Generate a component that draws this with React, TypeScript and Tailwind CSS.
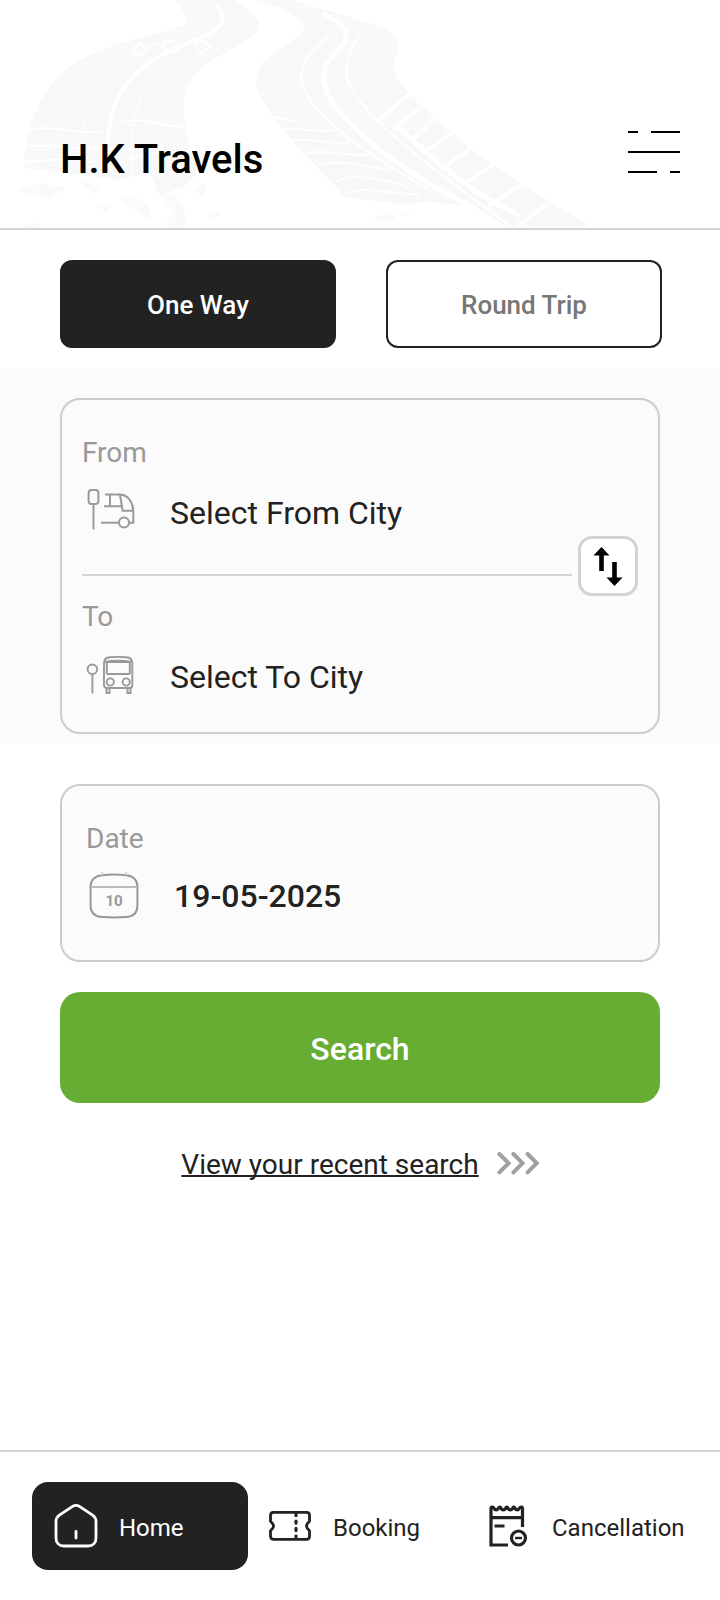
import React, { useState } from 'react';
import { clsx } from 'clsx';

const TyreTracks = () => (
  <svg
    className="absolute left-0 top-0 w-[720px] h-[228px] pointer-events-none"
    viewBox="0 0 720 228"
    fill="none"
    aria-hidden="true"
  >
    <defs>
      <pattern id="tread" width="50" height="5" patternUnits="userSpaceOnUse" patternTransform="rotate(3)">
        <path d="M0 2 Q12 0 25 2 T50 2" stroke="#fff" strokeWidth="1" opacity="0.4" />
      </pattern>
      <clipPath id="left-track">
        <path d="M175 0H232C250 8 262 20 259 28C256 40 225 50 205 65C188 78 182 95 184 115C186 135 190 150 198 172L188 184L160 196L150 172L120 180L24 168C24 140 34 105 52 84C80 45 150 38 185 25C190 15 180 8 175 0Z" />
      </clipPath>
      <clipPath id="right-track">
        <path d="M258 0H290L340 14L385 28C398 34 400 45 397 55C393 62 393 72 396 78L420 105L475 152L530 190L590 226H505L474 206L430 202L400 204L345 197L325 175L300 150L275 120L257 90C254 70 262 62 275 52C290 42 304 36 304 26C300 16 280 8 258 0Z" />
      </clipPath>
    </defs>

    <g clipPath="url(#left-track)">
      <path d="M0 0H300V228H0Z" fill="#f8f8f8" />
      <path d="M0 0H300V228H0Z" fill="url(#tread)" />
      <path d="M216 6C228 16 224 28 205 36C165 52 108 70 108 145" stroke="#fff" strokeWidth="4" />
      <path d="M170 40C120 50 80 90 82 145" stroke="#fff" strokeWidth="1" />
      <path d="M190 55C150 66 126 100 132 180" stroke="#fff" strokeWidth="1" />
      <path d="M24 130C50 124 70 134 100 132M20 148C50 142 80 152 120 148M20 162L90 158M120 122C150 116 170 130 190 126M130 160C150 148 180 156 200 148" stroke="#fff" strokeWidth="2" />
      <path d="M132 50L140 43L147 50L140 56ZM162 45C168 38 178 40 180 48C176 54 166 53 162 45ZM194 42L200 54L210 46L204 41Z" stroke="#fff" strokeWidth="2" />
    </g>
    <path
      d="M18 190L40 183L66 188L50 200L30 194ZM80 180L100 188L92 194ZM96 204L110 207L104 212ZM118 200L134 196L148 206L152 222L138 212ZM158 192L176 196L184 208L186 226H164L174 212ZM192 190L206 184L204 198ZM208 210L222 214L212 220ZM22 226L36 223L40 228H22Z"
      fill="#fafafa"
    />

    <g clipPath="url(#right-track)">
      <path d="M240 0H600V228H240Z" fill="#f8f8f8" />
      <path d="M240 0H600V130H240Z" fill="url(#tread)" />
      <path d="M322 14C344 22 352 34 342 46C322 66 316 80 336 108C364 142 410 176 474 208" stroke="#fff" strokeWidth="5" />
      <path d="M330 34C310 52 298 66 302 84C312 112 346 142 430 190" stroke="#fff" strokeWidth="2" />
      <path d="M360 34C346 56 342 74 352 90C374 124 420 160 510 226" stroke="#fff" strokeWidth="2" />
      <path d="M396 126L440 164L476 192L520 216" stroke="#fff" strokeWidth="5" />
      <path
        d="M270 116L300 122M280 130C300 126 318 134 334 130M290 141C310 136 330 146 350 142M305 154C325 148 350 158 370 154M318 165C340 158 370 168 390 170M335 182C350 172 390 180 410 188M350 192C370 186 400 196 420 194"
        stroke="#fff"
        strokeWidth="2"
      />
      <path
        d="M412 92L376 122M426 104L396 126M440 114L412 140M458 128L428 150M476 144L446 166M500 160L464 184M528 180L488 206M556 198L518 226"
        stroke="#fff"
        strokeWidth="4"
      />
    </g>
    <path d="M374 216L396 214L394 220L376 221ZM402 212L412 214L408 218Z" fill="#fafafa" />
  </svg>
);

const MenuIcon = () => (
  <svg className="w-[52px] h-[44px]" viewBox="0 0 52 44" stroke="#000" strokeWidth="2" aria-hidden="true">
    <path d="M0 2H10M23 2H52M0 22H52M0 42H29M42 42H52" />
  </svg>
);

const FromBusIcon = () => (
  <svg className="size-14 shrink-0" viewBox="0 0 56 56" fill="none" stroke="#999" strokeWidth="2" aria-hidden="true">
    <rect x="6.6" y="6" width="9.8" height="14" rx="3" />
    <path d="M11.5 20V45.5" />
    <path d="M23 10.5H37C46 10.5 51.3 18 51.3 28V38.7H47" />
    <path d="M28 11V22M22 22.2H39M38 11L40.7 26.7H51.5" />
    <circle cx="42" cy="38.5" r="5" />
    <path d="M19 38.7H37" />
  </svg>
);

const ToBusIcon = () => (
  <svg className="size-14 shrink-0" viewBox="0 0 56 56" fill="none" stroke="#999" strokeWidth="1.9" aria-hidden="true">
    <circle cx="10.4" cy="21.3" r="4.8" />
    <path d="M10.4 26V45.5" />
    <path d="M22 15C22 11 24 9.4 28 9.2C33 8.8 39 8.8 44 9.2C48 9.4 50.3 11 50.3 15V37C50.3 39 49 40 47.5 40H25C23 40 22 39 22 37Z" />
    <path d="M23 13.8C30 12.6 42 12.6 49 13.8" />
    <rect x="24.8" y="14" width="23" height="12" rx="1" />
    <circle cx="28.3" cy="34" r="3.6" />
    <circle cx="44.2" cy="34" r="3.6" />
    <path d="M24.5 40V45H27.5V40M45.5 40V45H48.5V40" />
  </svg>
);

const CalendarIcon = () => (
  <svg className="size-14 shrink-0" viewBox="0 0 56 56" fill="none" stroke="#999" aria-hidden="true">
    <path
      d="M16 7.2C24 6.4 32 6.4 40 7.2C47 7.6 51.2 12 51.4 18V38C51.2 45 47 48.6 40 49C32 49.6 24 49.6 16 49C9 48.6 4.8 45 4.6 38V18C4.8 12 9 7.6 16 7.2Z"
      strokeWidth="2"
    />
    <path d="M5 19H51" stroke="#bbb" strokeWidth="1.8" />
    <path d="M16.5 4V7M40 4V7" stroke="#ccc" strokeWidth="1.6" />
    <text x="28" y="38" textAnchor="middle" className="text-[15px] font-bold" fill="#999" stroke="none">
      10
    </text>
  </svg>
);

const SwapIcon = () => (
  <svg className="size-full" viewBox="3 3 54 54" fill="#000" aria-hidden="true">
    <path d="M23.5 11L31.5 19.5H25.8V35H21.2V19.5H15.5Z" />
    <path d="M36.5 50L28.5 41.5H34.2V26H38.8V41.5H44.5Z" />
  </svg>
);

const ChevronsIcon = () => (
  <svg
    className="w-[42px] h-6"
    viewBox="0 0 42 24"
    fill="none"
    stroke="#a0a0a0"
    strokeWidth="4"
    strokeLinecap="round"
    aria-hidden="true"
  >
    <path d="M2.4 2L11.6 11.2L2.4 20.4M16.4 2L25.6 11.2L16.4 20.4M30.6 2L39.8 11.2L30.6 20.4" />
  </svg>
);

const HomeIcon = () => (
  <svg className="size-11" viewBox="0 0 44 44" fill="none" stroke="currentColor" strokeWidth="2.8" aria-hidden="true">
    <path d="M18.2 2.6C20.5 1.2 23.5 1.2 25.8 2.6L38.6 11.2C40.8 12.8 42 15 42 17.6V34C42 39 39 42 34 42H10C5 42 2 39 2 34V17.6C2 15 3.2 12.8 5.4 11.2Z" />
    <path d="M22 27.5V34" strokeLinecap="round" />
  </svg>
);

const TicketIcon = () => (
  <svg className="size-11" viewBox="0 0 44 44" fill="none" stroke="currentColor" strokeWidth="2.8" aria-hidden="true">
    <path d="M5.5 8.3H38.5C40.3 8.3 41.5 9.5 41.5 11.3V17.3L39.6 19.3C38.4 20.8 38.4 23.2 39.6 24.7L41.5 26.7V32.3C41.5 34.1 40.3 35.3 38.5 35.3H5.5C3.7 35.3 2.5 34.1 2.5 32.3V26.7L4.4 24.7C5.6 23.2 5.6 20.8 4.4 19.3L2.5 17.3V11.3C2.5 9.5 3.7 8.3 5.5 8.3Z" />
    <path d="M28 9V13M28 30.8V35" strokeWidth="3" />
    <path d="M28 17V19.2M28 24.4V26.6" strokeWidth="3.2" strokeLinecap="round" />
  </svg>
);

const CancelIcon = () => (
  <svg className="size-11" viewBox="0 0 44 44" fill="none" stroke="currentColor" strokeWidth="3.2" aria-hidden="true">
    <path d="M21 41H4V4.5C4 3 5.2 2.6 6.4 3.6C8 6.6 10.4 6.6 12 3.6Q12.8 2.6 13.6 3.6C15 6.6 17.6 6.6 19 3.6Q19.8 2.6 20.6 3.6C22 6.6 24.6 6.6 26 3.6Q26.8 2.6 27.6 3.6C29 6.6 31.4 6.6 33 3.6C34 2.6 35.5 3 35.5 4.5V23" />
    <path d="M4 13.6H35.5M7.5 22H17.5" />
    <circle cx="31.5" cy="34" r="7" />
    <path d="M28 34H35" strokeWidth="2.4" />
  </svg>
);

const tripTypes = ['One Way', 'Round Trip'];

const navItems = [
  { name: 'Home', href: '#home', icon: HomeIcon, active: true },
  { name: 'Booking', href: '#booking', icon: TicketIcon, active: false },
  { name: 'Cancellation', href: '#cancellation', icon: CancelIcon, active: false }
];

const App = () => {
  const [tripType, setTripType] = useState('One Way');
  const [date, setDate] = useState('19-05-2025');

  return (
    <div className="flex min-h-screen flex-col bg-white font-['Roboto',sans-serif] text-[#222]">
      <header className="relative overflow-hidden border-b-2 border-[#d3d3d3]">
        <TyreTracks />
        <div className="relative flex items-start justify-between pt-[130px] pb-[38px] pl-[60px] pr-10">
          <h1 className="text-[40px] leading-[60px] font-medium text-black">H.K Travels</h1>
          <button type="button" aria-label="Menu">
            <MenuIcon />
          </button>
        </div>
      </header>

      <main className="flex-1">
        <div className="grid grid-cols-2 gap-[50px] pt-[30px] pb-5 pl-[60px] pr-[58px]">
          {tripTypes.map((type) => (
            <button
              key={type}
              type="button"
              aria-pressed={tripType === type}
              onClick={() => setTripType(type)}
              className={clsx(
                'h-[88px] rounded-xl border-2 border-[#222] pt-[2px] text-[26px] font-medium',
                tripType === type ? 'bg-[#222] text-white' : 'bg-white text-[#777]'
              )}
            >
              {type}
            </button>
          ))}
        </div>

        <section className="bg-[#fbfbfb] px-[60px] pt-[30px] pb-[10px]">
          <div className="rounded-[20px] border-2 border-[#ccc] px-5 pt-9 pb-7">
            <label htmlFor="from-city" className="block text-[28px] leading-[34px] text-[#999]">From</label>
            <button id="from-city" type="button" className="mt-[14px] flex h-14 w-full items-center gap-8 text-[32px]">
              <FromBusIcon />
              <span className="pt-[2px]">Select From City</span>
            </button>

            <div className="-mt-1 mb-1 flex items-end gap-[6px]">
              <div className="mb-5 h-[2px] flex-1 bg-[#d3d3d3]" />
              <button
                type="button"
                aria-label="Swap cities"
                className="size-[60px] rounded-[14px] border-3 border-[#d3d3d3] bg-white"
              >
                <SwapIcon />
              </button>
            </div>

            <label htmlFor="to-city" className="block text-[28px] leading-[34px] text-[#999]">To</label>
            <button id="to-city" type="button" className="mt-[14px] flex h-14 w-full items-center gap-8 text-[32px]">
              <ToBusIcon />
              <span className="pt-[2px]">Select To City</span>
            </button>
          </div>
        </section>

        <section className="px-[60px] pt-10">
          <div className="rounded-[20px] border-2 border-[#ccc] bg-[#fbfbfb] px-6 py-9">
            <label htmlFor="date" className="block text-[28px] leading-[34px] text-[#999]">Date</label>
            <div className="mt-3 flex h-14 items-center gap-8">
              <CalendarIcon />
              <input
                id="date"
                type="text"
                value={date}
                onChange={(e) => setDate(e.target.value)}
                className="min-w-0 flex-1 bg-transparent text-[32px] font-medium outline-none"
              />
            </div>
          </div>

          <button
            type="submit"
            className="mt-[30px] h-[111px] w-full rounded-[20px] bg-[#67ad34] pt-[2px] text-[32px] font-medium text-white"
          >
            Search
          </button>

          <div className="mt-10 flex justify-center">
            <a href="#recent" className="flex items-center gap-[18px] text-[28px] leading-10">
              <span className="pt-[2px] underline decoration-2 [text-decoration-skip-ink:none]">
                View your recent search
              </span>
              <ChevronsIcon />
            </a>
          </div>
        </section>
      </main>

      <nav className="grid grid-cols-[216fr_219fr_221fr] border-t-2 border-[#d3d3d3] px-8 py-[30px]">
        {navItems.map(({ name, href, icon: Icon, active }) => (
          <a
            key={name}
            href={href}
            className={clsx(
              'flex h-[88px] items-center gap-[21px] rounded-2xl text-[24px]',
              active ? 'bg-[#222] pl-[22px] text-white' : 'pl-5'
            )}
          >
            <Icon />
            <span className="pt-1">{name}</span>
          </a>
        ))}
      </nav>
    </div>
  );
};

export default App;
